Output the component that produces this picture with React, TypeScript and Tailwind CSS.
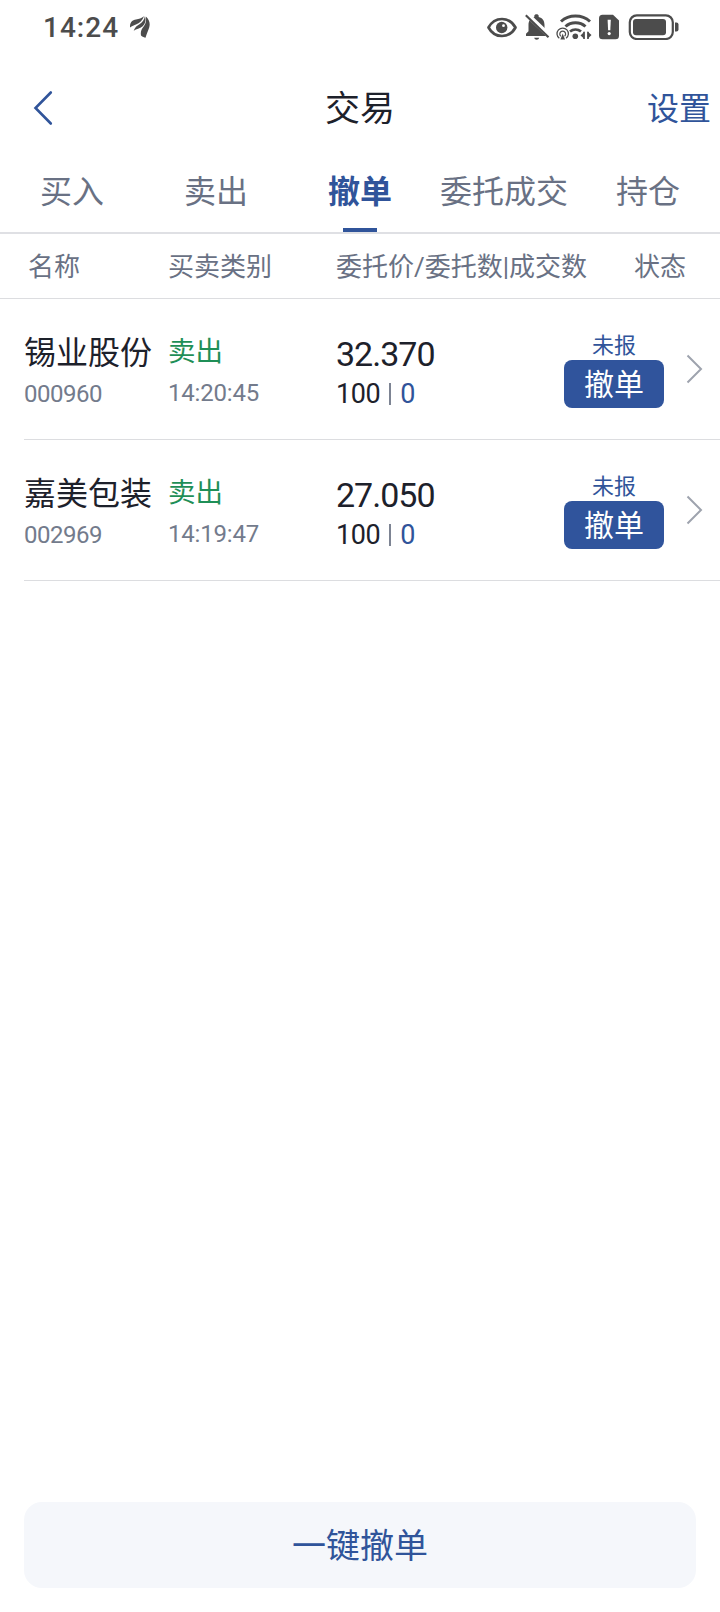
import clsx from "clsx";

const tabs = ["买入", "卖出", "撤单", "委托成交", "持仓"];

const orders = [
  { name: "锡业股份", code: "000960", side: "卖出", time: "14:20:45", price: "32.370", amount: 100, filled: 0, status: "未报" },
  { name: "嘉美包装", code: "002969", side: "卖出", time: "14:19:47", price: "27.050", amount: 100, filled: 0, status: "未报" },
];

type Order = (typeof orders)[number];

const StatusBar = () => {
  return (
    <div className="flex h-[54px] items-center pl-[43px] pr-[41px] text-[#4c4c4c]">
      <span className="pt-[2px] text-[28px] font-medium leading-none tracking-[1px]">14:24</span>
      <svg className="ml-[11px]" width="20" height="22" viewBox="0 0 20 22" fill="currentColor">
        <path d="M0 11.500C-.2 6.500 2 4.200 6 3.600 9 3 11.500 2.200 14 .3 12.500 4.500 10 6.900 6.500 8.200 4 9 2 10 0 11.500Z" />
        <path d="M3.700 14.700C4.800 11 7.300 9.500 9.800 7.900 12.600 6 14.200 4 14.900 .2 16.400 4 15.200 7.700 12.700 10.200 9.700 12.900 6.500 12.600 3.700 14.700Z" />
        <path d="M11 19.500C10.300 15.500 11.500 13.200 13.500 10.700 15.900 7.500 16.500 4.500 15.800 .5 19.400 3.500 20.400 7.500 19.200 11.500 18 15 16.900 17.500 15.500 21.800 14.500 21.300 12.500 20.900 11 19.500Z" />
      </svg>

      <div className="ml-auto flex items-center">
        {/* Eye comfort */}
        <svg width="30" height="26" viewBox="0 0 30 26" fill="none">
          <path d="M1.500 13.500C4.500 8 9.500 5 15 5S25.500 8 28.500 13.500C25.500 19 20.500 22 15 22S4.500 19 1.500 13.500Z" stroke="currentColor" strokeWidth="2.700" strokeLinejoin="round" />
          <circle cx="14.700" cy="13.500" r="5.700" fill="currentColor" />
          <circle cx="16.500" cy="11.700" r="1.400" fill="#fff" />
        </svg>
        {/* Muted */}
        <svg className="ml-2" width="25" height="26" viewBox="0 0 25 26">
          <path d="M1 22V19.800L3.500 17.200V11C3.500 6.500 5.800 4 9.300 3V1.800C9.300 -.4 13.700 -.4 13.700 1.800V3C17.500 4 19.500 6.500 19.500 11V17.200L22 19.800V22Z" fill="currentColor" />
          <path d="M9.200 23.800H14.200C13.800 26.400 9.600 26.400 9.200 23.800Z" fill="currentColor" />
          <path d="M1.800 .3L24.800 22.300" stroke="#fff" strokeWidth="5" />
          <path d="M.8 1.300L23.500 23.200" stroke="currentColor" strokeWidth="2.200" />
        </svg>
        {/* Wi-Fi with hotspot */}
        <svg className="ml-[6px]" width="36" height="26" viewBox="0 0 36 26" fill="none" stroke="currentColor">
          <path d="M5 7.500C13 .2 26 .2 34 7.500" strokeWidth="3" />
          <path d="M9.500 12.500C15 7.500 24 7.500 29.500 12.500" strokeWidth="3" />
          <path d="M14 17.500C17.200 14.900 21.800 14.900 25 17.500" strokeWidth="2.800" />
          <circle cx="19.300" cy="22.300" r="2.800" fill="currentColor" stroke="none" />
          <path d="M3.300 24.300A5.700 5.700 0 1 1 10.100 24.300" strokeWidth="1.300" />
          <path d="M4.800 22.200A2.900 2.900 0 1 1 8.600 22.200" strokeWidth="1.200" />
          <path d="M6.700 19.500L9 25.500H4.400Z" fill="currentColor" stroke="none" />
          <path d="M28.500 17.500V25L24.500 21.500ZM31.500 17.500V25L35.500 21Z" fill="currentColor" stroke="none" />
          <path d="M28 17.800V25M32 17.800V25" strokeWidth="1.600" />
        </svg>
        {/* SIM alert */}
        <svg className="ml-[7px]" width="20" height="26" viewBox="0 0 20 26">
          <path d="M3.500 .7H14L20 6.500V21.700Q20 25.200 16.500 25.200H3.500Q0 25.200 0 21.700V4.200Q0 .7 3.500 .7Z" fill="currentColor" />
          <path d="M8.600 5.800H11.800L11.300 16.200H9.100Z" fill="#fff" />
          <circle cx="10.200" cy="19.600" r="1.600" fill="#fff" />
        </svg>
        {/* Battery */}
        <svg className="ml-[9px]" width="51" height="26" viewBox="0 0 51 26">
          <rect x="1.800" y="1.300" width="43" height="23.700" rx="7" fill="none" stroke="currentColor" strokeWidth="2.200" />
          <rect x="5" y="5" width="33" height="16.200" rx="3" fill="currentColor" />
          <path d="M47 8.500H48.500Q50.500 8.500 50.500 10.500V15.500Q50.500 17.500 48.500 17.500H47Z" fill="currentColor" />
        </svg>
      </div>
    </div>
  );
};

const Header = () => {
  return (
    <header className="flex h-[108px] items-center justify-between pl-[33px] pr-[9px]">
      <div className="w-16">
        <svg width="20" height="36" viewBox="0 0 20 36" fill="none" stroke="#30549a" strokeWidth="2.600" strokeLinecap="round">
          <path d="M17.800 2.500L2.500 18L17.800 33.500" />
        </svg>
      </div>
      <h1 className="mr-6 pt-1 text-[35px] text-[#1d212b]">交易</h1>
      <button className="w-16 pt-[2px] text-right text-[32px] text-[#30549a]">设置</button>
    </header>
  );
};

const Tabs = () => {
  return (
    <nav className="grid h-[72px] grid-cols-5 border-b-2 border-[#dfe0e4]">
      {tabs.map((tab) => (
        <button
          key={tab}
          className={clsx(
            "flex flex-col items-center justify-between text-[32px] leading-[60px]",
            tab === "撤单" ? "font-bold text-[#30549a]" : "text-[#697184]"
          )}
        >
          {tab}
          {tab === "撤单" && <span className="h-1 w-[34px] bg-[#30549a]" />}
        </button>
      ))}
    </nav>
  );
};

const OrderRow = ({ order }: { order: Order }) => {
  return (
    <li className="ml-6 flex h-[141px] border-b border-[#dcdde0]">
      <div className="w-[144px] pt-[34px]">
        <div className="text-[32px] leading-10 text-[#1d212b]">{order.name}</div>
        <div className="mt-[7px] text-2xl leading-7 tracking-[-0.5px] text-[#737b8c]">{order.code}</div>
      </div>
      <div className="w-[168px] pt-[33px]">
        <div className="text-[27.500px] leading-10 text-[#1f8f57]">{order.side}</div>
        <div className="mt-[7px] text-2xl leading-7 tracking-[-0.2px] text-[#737b8c]">{order.time}</div>
      </div>
      <div className="w-[228px] pt-[35px] text-[#1d212b]">
        <div className="text-[34px] leading-10 tracking-[-1px]">{order.price}</div>
        <div className="flex items-center text-[27px] leading-10 tracking-[-0.4px]">
          {order.amount}
          <span className="mx-[9px] h-[22px] w-[2px] bg-[#7d8493]" />
          <span className="text-[#30549a]">{order.filled}</span>
        </div>
      </div>
      <div className="flex w-[100px] flex-col items-center pt-[33px]">
        <span className="text-[22px] leading-7 text-[#30549a]">{order.status}</span>
        <button className="h-12 w-full rounded-lg bg-[#30549c] text-[30px] leading-[50px] text-white">撤单</button>
      </div>
      <svg className="ml-[22px] mt-[55px]" width="18" height="30" viewBox="0 0 18 30" fill="none" stroke="#9ea3ae" strokeWidth="2">
        <path d="M1.500 1.500L15 15L1.500 28.500" />
      </svg>
    </li>
  );
};

const App = () => {
  return (
    <main className="flex h-[1612px] w-[720px] flex-col overflow-hidden bg-white font-[Roboto,'Noto_Sans_CJK_SC',sans-serif]">
      <StatusBar />
      <Header />
      <Tabs />

      <div className="flex h-[65px] items-center border-b border-[#dcdde0] pl-7 pt-[2px] text-[26px] text-[#697184]">
        <span className="w-[140px]">名称</span>
        <span className="w-[168px]">买卖类别</span>
        <span className="w-[298px] whitespace-nowrap">委托价/委托数|成交数</span>
        <span>状态</span>
      </div>

      <ul>
        {orders.map((order) => (
          <OrderRow key={order.code} order={order} />
        ))}
      </ul>

      <button className="mx-6 mb-6 mt-auto h-[86px] rounded-[18px] bg-[#f5f7fb] pt-[2px] text-[34px] text-[#30549a]">
        一键撤单
      </button>
    </main>
  );
};

export default App;
